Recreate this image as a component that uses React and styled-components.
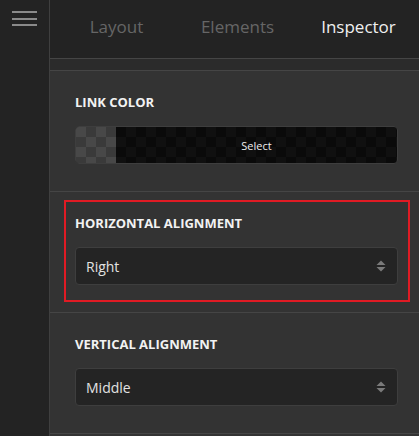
import React from "react";
import styled, { createGlobalStyle } from "styled-components";

const GlobalStyle = createGlobalStyle`
  html, body {
    margin: 0;
    padding: 0;
    background: #333333;
    font-family: "Open Sans", "Noto Sans", sans-serif;
  }
`;

const Tabs = [
  { name: "Layout", active: false },
  { name: "Elements", active: false },
  { name: "Inspector", active: true },
];

function Arrows() {
  return (
    <svg width="10" height="12" viewBox="0 0 10 12">
      <path d="M5 0.5 L9.5 5 L0.5 5 Z" fill="#7a7a7a" />
      <path d="M0.5 7 L9.5 7 L5 11.5 Z" fill="#7a7a7a" />
    </svg>
  );
}

function Dropdown({ value }) {
  return (
    <SelectBox>
      <span>{value}</span>
      <Arrows />
    </SelectBox>
  );
}

function App() {
  return (
    <>
      <GlobalStyle />
      <Shell>
        <Sidebar>
          <Burger>
            <span />
            <span />
            <span />
          </Burger>
        </Sidebar>
        <Main>
          <TabBar>
            {Tabs.map((t) => (
              <Tab key={t.name} $active={t.active}>
                {t.name}
              </Tab>
            ))}
          </TabBar>
          <Strip />
          <Section>
            <Label>Link Color</Label>
            <ColorPicker>
              <Swatch />
              <PickerText>Select</PickerText>
            </ColorPicker>
          </Section>
          <Section>
            <Highlight />
            <Label>Horizontal Alignment</Label>
            <Dropdown value="Right" />
          </Section>
          <Section>
            <Label>Vertical Alignment</Label>
            <Dropdown value="Middle" />
          </Section>
        </Main>
      </Shell>
    </>
  );
}

const Shell = styled.div`
  display: grid;
  grid-template-columns: 50px 1fr;
  width: 419px;
  height: 436px;
  overflow: hidden;
`;

const Sidebar = styled.div`
  background: #232323;
  border-right: 1px solid #3f3f3f;
  padding: 11px 0 0 12px;
`;

const Burger = styled.div`
  display: flex;
  flex-direction: column;
  gap: 4.5px;
  width: 25px;
  span {
    display: block;
    height: 2px;
    background: #8a8a8a;
  }
`;

const Main = styled.div`
  background: #333333;
  display: flex;
  flex-direction: column;
`;

const TabBar = styled.div`
  height: 59px;
  box-sizing: border-box;
  display: flex;
  align-items: center;
  background: #232323;
  border-bottom: 1px solid #454545;
  padding: 0 0 5px 6px;
`;

const Tab = styled.div`
  flex: 1;
  text-align: center;
  font-size: 17px;
  color: ${(p) => (p.$active ? "#f0f0f0" : "#666666")};
`;

const Strip = styled.div`
  height: 11px;
  background: #2b2b2b;
  border-bottom: 1px solid #454545;
`;

const Section = styled.div`
  position: relative;
  padding: 23px 21px 27px 25px;
  border-bottom: 1px solid #454545;
`;

const Highlight = styled.div`
  position: absolute;
  top: 8px;
  left: 14px;
  right: 9px;
  bottom: 10px;
  border: 2.5px solid #e01b24;
  pointer-events: none;
`;

const Label = styled.div`
  font-size: 13px;
  font-weight: 700;
  line-height: 16px;
  text-transform: uppercase;
  color: #f2f2f2;
  margin-bottom: 16px;
`;

const ColorPicker = styled.div`
  height: 36px;
  border: 1px solid #3e3e3e;
  border-radius: 4px;
  overflow: hidden;
  display: flex;
  background-color: #0c0c0c;
  background-image: repeating-conic-gradient(#101010 0 25%, #0a0a0a 0 50%);
  background-size: 20px 20px;
`;

const Swatch = styled.div`
  width: 40px;
  background-color: #3a3a3a;
  background-image: repeating-conic-gradient(#3a3a3a 0 25%, #484848 0 50%);
  background-size: 20px 20px;
`;

const PickerText = styled.div`
  flex: 1;
  display: flex;
  align-items: center;
  justify-content: center;
  font-size: 11px;
  color: #eeeeee;
`;

const SelectBox = styled.div`
  height: 36px;
  border: 1px solid #3e3e3e;
  border-radius: 4px;
  background: #242424;
  display: flex;
  align-items: center;
  justify-content: space-between;
  padding: 0 11px 0 10px;
  font-size: 14px;
  color: #e2e2e2;
`;

export default App;
